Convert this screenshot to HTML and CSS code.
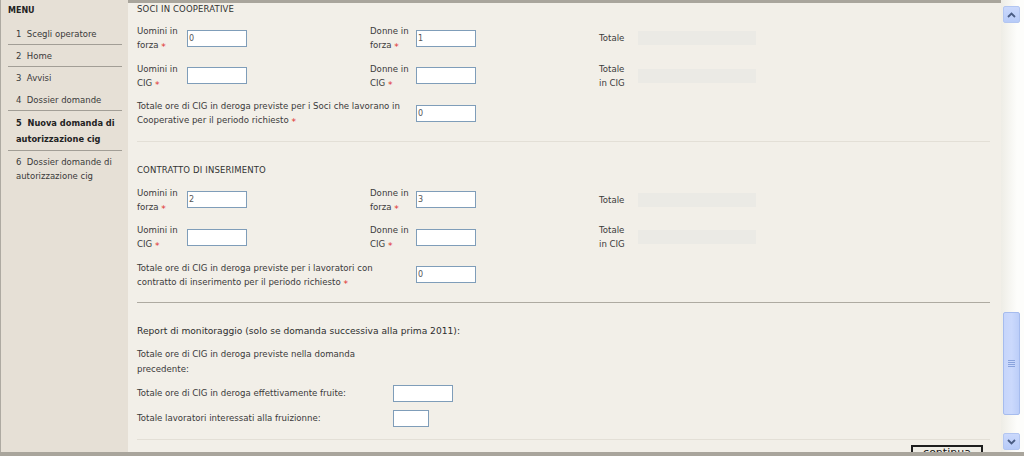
FILE: index.html
```html
<!DOCTYPE html>
<html lang="it">
<head>
<meta charset="utf-8">
<title>Nuova domanda di autorizzazione cig</title>
<link rel="stylesheet" href="styles.css">
</head>
<body>
<div class="screen">
  <div class="frame">
    <aside class="sidebar">
      <div class="menu-title">MENU</div>
      <ul class="menu">
        <li class="item">1&nbsp; Scegli operatore</li>
        <li class="item">2&nbsp; Home</li>
        <li class="item no-sep">3&nbsp; Avvisi</li>
        <li class="item">4&nbsp; Dossier domande</li>
        <li class="item active">5&nbsp; Nuova domanda di autorizzazione cig</li>
        <li class="item no-sep">6&nbsp; Dossier domande di autorizzazione cig</li>
      </ul>
    </aside>
    <main class="main">
      <div class="content">
        <h2 class="group-title">SOCI IN COOPERATIVE</h2>
        <div class="fields">
          <div class="label">Uomini in<br>forza <span class="req">*</span></div>
          <input class="input" type="text" value="0">
          <div></div>
          <div class="label">Donne in<br>forza <span class="req">*</span></div>
          <input class="input" type="text" value="1">
          <div></div>
          <div class="label">Totale</div>
          <div class="total-field"></div>

          <div class="label">Uomini in<br>CIG <span class="req">*</span></div>
          <input class="input" type="text" value="">
          <div></div>
          <div class="label">Donne in<br>CIG <span class="req">*</span></div>
          <input class="input" type="text" value="">
          <div></div>
          <div class="label">Totale<br>in CIG</div>
          <div class="total-field"></div>

          <div class="label wide">Totale ore di CIG in deroga previste per i Soci che lavorano in<br>Cooperative per il periodo richiesto <span class="req">*</span></div>
          <input class="input" type="text" value="0">
        </div>
        <hr class="sep light sep-1">

        <h2 class="group-title title-2">CONTRATTO DI INSERIMENTO</h2>
        <div class="fields fields-2">
          <div class="label">Uomini in<br>forza <span class="req">*</span></div>
          <input class="input" type="text" value="2">
          <div></div>
          <div class="label">Donne in<br>forza <span class="req">*</span></div>
          <input class="input" type="text" value="3">
          <div></div>
          <div class="label">Totale</div>
          <div class="total-field"></div>

          <div class="label">Uomini in<br>CIG <span class="req">*</span></div>
          <input class="input" type="text" value="">
          <div></div>
          <div class="label">Donne in<br>CIG <span class="req">*</span></div>
          <input class="input" type="text" value="">
          <div></div>
          <div class="label">Totale<br>in CIG</div>
          <div class="total-field"></div>

          <div class="label wide">Totale ore di CIG in deroga previste per i lavoratori con<br>contratto di inserimento per il periodo richiesto <span class="req">*</span></div>
          <input class="input" type="text" value="0">
        </div>
        <hr class="sep dark sep-2">

        <h3 class="report-title">Report di monitoraggio (solo se domanda successiva alla prima 2011):</h3>
        <div class="report">
          <div class="report-row text-row">
            <div class="report-label">Totale ore di CIG in deroga previste nella domanda<br>precedente:</div>
          </div>
          <div class="report-row">
            <div class="report-label">Totale ore di CIG in deroga effettivamente fruite:</div>
            <input class="input" type="text" value="">
          </div>
          <div class="report-row">
            <div class="report-label">Totale lavoratori interessati alla fruizionne:</div>
            <input class="input small" type="text" value="">
          </div>
        </div>
        <hr class="sep light sep-3">
        <div class="actions">
          <button class="button" type="button">continua</button>
        </div>
      </div>
      <div class="scrollbar">
        <div class="sb-btn">
          <svg width="9" height="6" viewBox="0 0 9 6"><polyline points="1,5 4.5,1.5 8,5" fill="none" stroke="#4a5d84" stroke-width="1.8"/></svg>
        </div>
        <div class="sb-track">
          <div class="sb-thumb">
            <svg width="7" height="7" viewBox="0 0 7 7"><g stroke="#8aa3dc" stroke-width="1"><line x1="0" y1="0.5" x2="7" y2="0.5"/><line x1="0" y1="2.5" x2="7" y2="2.5"/><line x1="0" y1="4.5" x2="7" y2="4.5"/><line x1="0" y1="6.5" x2="7" y2="6.5"/></g></svg>
          </div>
        </div>
        <div class="sb-btn">
          <svg width="9" height="6" viewBox="0 0 9 6"><polyline points="1,1 4.5,4.5 8,1" fill="none" stroke="#4a5d84" stroke-width="1.8"/></svg>
        </div>
      </div>
    </main>
  </div>
  <div class="bottom-bar"></div>
</div>
</body>
</html>
```
FILE: styles.css
```css
* { box-sizing: border-box; }
html, body { margin: 0; padding: 0; }
body {
  width: 1024px;
  height: 456px;
  overflow: hidden;
  background: #f2efe8;
  font-family: "DejaVu Sans", "Liberation Sans", sans-serif;
  font-size: 8.6px;
  line-height: 14px;
  color: #3a3a3a;
}
.screen { display: flex; flex-direction: column; height: 456px; }
.frame { display: flex; height: 452px; }
.bottom-bar { height: 4px; background: #a9a59c; }

/* Sidebar */
.sidebar {
  width: 128px;
  flex: none;
  background: #e6e0d6;
  border-left: 1px solid #aeaaa2;
  padding: 4px 6px 0 7px;
}
.menu-title { font-weight: bold; color: #222; line-height: 14px; font-size: 8px; }
.menu { list-style: none; margin: 5px 0 0; padding: 0; }
.item {
  padding: 4px 0 3px 8px;
  border-bottom: 1px solid #a29e96;
  color: #3a3a3a;
  font-size: 8.5px;
}
.item.no-sep { border-bottom-color: transparent; }
.item.active {
  font-family: "DejaVu Sans Condensed", "DejaVu Sans", sans-serif;
  font-stretch: condensed;
  font-weight: bold;
  font-size: 9.2px;
  line-height: 16px;
  color: #222;
}

/* Main */
.main { flex: 1; display: flex; min-width: 0; }
.content {
  flex: 1;
  min-width: 0;
  border-top: 3px solid #a9a59c;
  overflow: hidden;
  padding: 0 11px 0 9px;
}
.group-title {
  margin: 0;
  font-size: 8.5px;
  font-weight: normal;
  line-height: 12px;
  letter-spacing: 0.15px;
  color: #333;
}
.title-2 { margin-top: 22px; }
.fields {
  display: grid;
  grid-template-columns: 50px 60px 123px 46px 60px 123px 39px 118px;
  grid-auto-rows: 28px;
  row-gap: 9.5px;
  align-items: center;
  margin-top: 9px;
}
.fields-2 { margin-top: 9.5px; }
.label { line-height: 14px; }
.label.wide { grid-column: 1 / span 4; }
.req { color: #e0302e; font-size: 9px; line-height: 0; vertical-align: -2px; }
.input {
  width: 60px;
  height: 17px;
  margin: 0;
  border: 1px solid #7f9db9;
  background: #fff;
  padding: 0 1px;
  font-family: inherit;
  font-size: 8px;
  color: #555;
  outline: none;
}
.input.small { width: 36px; }
.total-field { height: 14px; background: #ebeae5; }

.sep { border: 0; margin: 0; height: 1px; }
.sep.light { background: #e3dfd6; }
.sep.dark { background: #aeaaa1; }
.sep-1 { margin-top: 14px; }
.sep-2 { margin-top: 13px; }
.sep-3 { margin-top: 11.5px; }

.report-title {
  margin: 21.5px 0 0;
  font-size: 9.15px;
  font-weight: normal;
  line-height: 14px;
  color: #2e2e2e;
}
.report { display: flex; flex-direction: column; gap: 8.5px; margin-top: 9px; }
.report-row { display: flex; align-items: center; min-height: 17px; }
.report-label { width: 256px; flex: none; line-height: 14.5px; }

.actions { display: flex; justify-content: flex-end; padding-right: 7px; margin-top: 5.5px; }
.button {
  width: 72px;
  height: 22px;
  margin: 0;
  padding: 0 0 9px;
  border: 2px solid #1e1e1e;
  background: #efede6;
  font-family: inherit;
  font-size: 11px;
  line-height: 11px;
  color: #111;
  display: block;
  text-align: center;
}

/* Scrollbar */
.scrollbar {
  width: 23px;
  flex: none;
  display: flex;
  flex-direction: column;
  padding: 6px 4px 2px 2px;
  background: linear-gradient(to right, #eeede6, #fdfdfb 70%);
}
.sb-btn {
  height: 17px;
  flex: none;
  border: 1px solid #b3c6f1;
  border-radius: 2px;
  background: linear-gradient(#cbd9fc, #b7cbf8);
  display: flex;
  align-items: center;
  justify-content: center;
}
.sb-track { flex: 1; }
.sb-thumb {
  margin-top: 289px;
  height: 103px;
  border: 1px solid #a6bcee;
  border-radius: 2px;
  background: linear-gradient(to right, #c6d5fb, #cbd9fc 50%, #bccef8);
  display: flex;
  align-items: center;
  justify-content: center;
}
```
